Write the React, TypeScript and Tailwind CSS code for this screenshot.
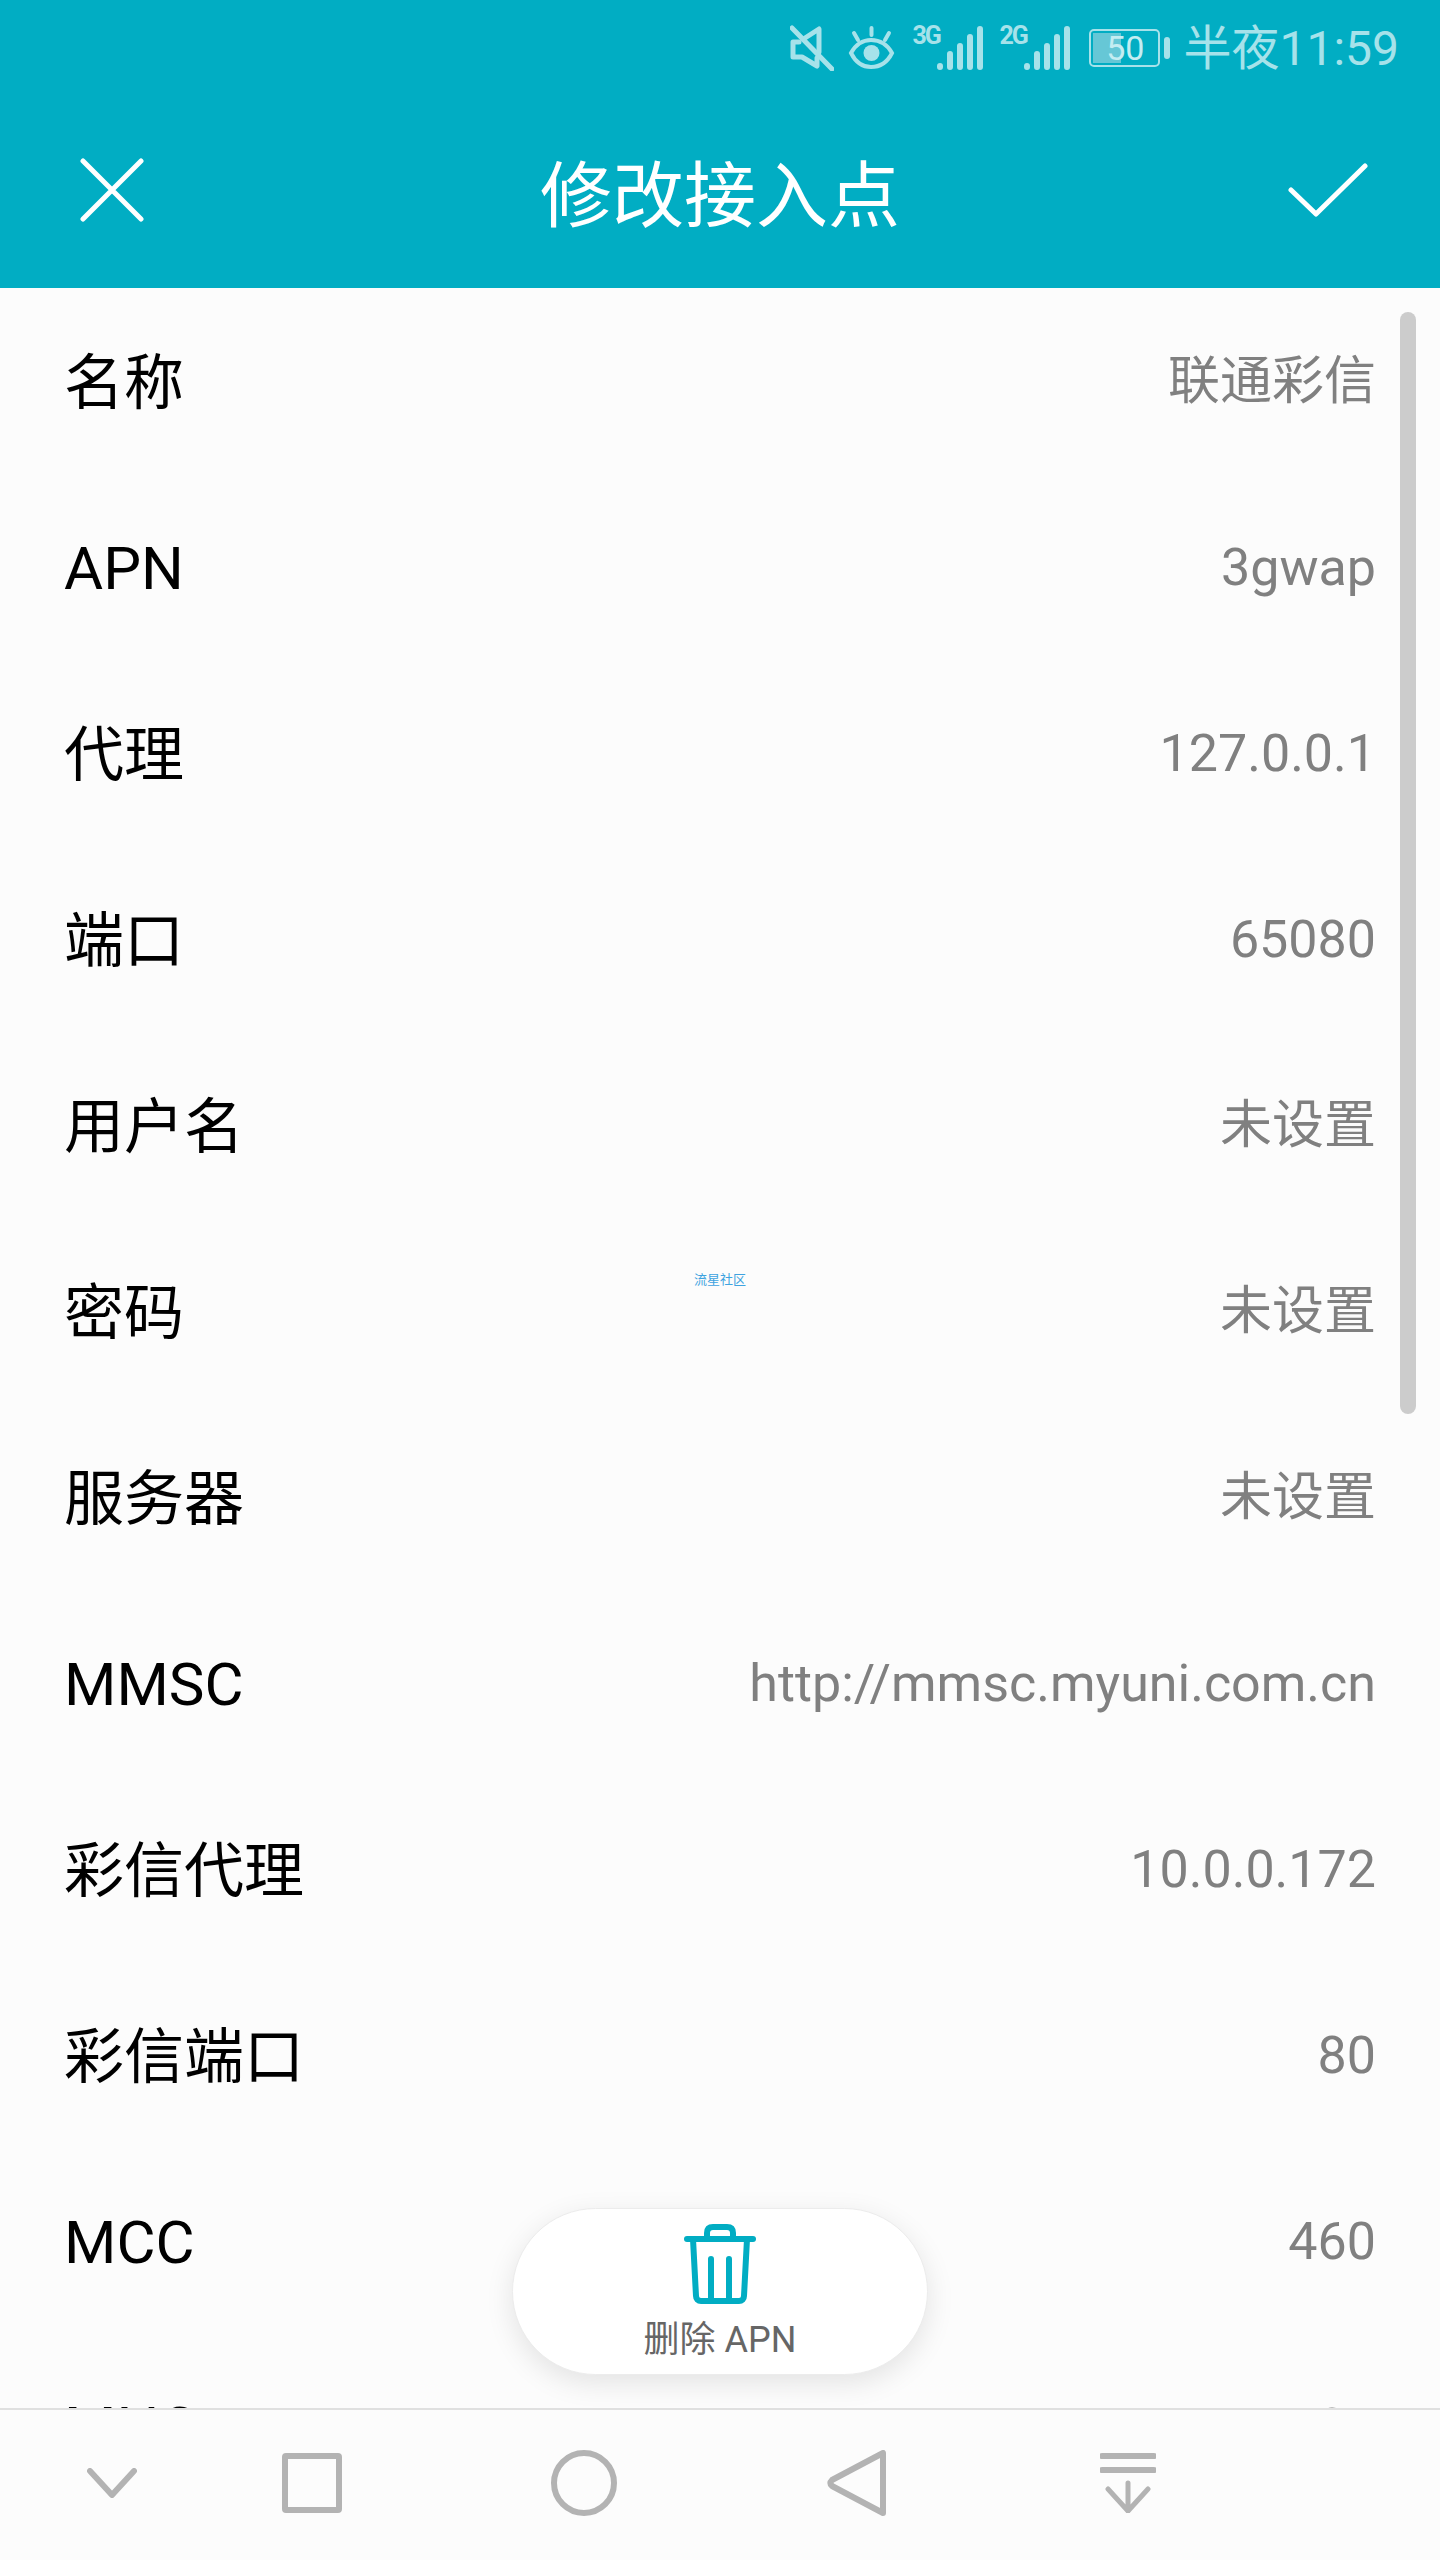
const rows = [
  ["名称", "联通彩信"],
  ["APN", "3gwap"],
  ["代理", "127.0.0.1"],
  ["端口", "65080"],
  ["用户名", "未设置"],
  ["密码", "未设置"],
  ["服务器", "未设置"],
  ["MMSC", "http://mmsc.myuni.com.cn"],
  ["彩信代理", "10.0.0.172"],
  ["彩信端口", "80"],
  ["MCC", "460"],
  ["MNC", "01"],
];

const latin = ["APN", "MMSC", "MCC", "MNC"];

const Signal = ({ label }: { label: string }) => (
  <div className="flex items-start">
    <span className="w-[25px] text-[25px] leading-[20px] font-bold tracking-[-2px] text-[#a6e2ea]">{label}</span>
    <svg width="46" height="44" viewBox="0 0 46 44" stroke="#a6e2ea" strokeWidth="6" strokeLinecap="round">
      <path d="M3 41v-1M13 41V28M23 41V20M33 41V11M43 41V3" />
    </svg>
  </div>
);

const StatusBar = () => (
  <div className="h-[96px] flex items-center justify-end pr-[41px] text-[#a6e2ea]">
    <svg width="44" height="46" viewBox="0 0 44 46" fill="none" stroke="#a6e2ea" strokeWidth="5" strokeLinecap="round" strokeLinejoin="round">
      <path d="M2 3l40 41" />
      <path d="M9 17H3v15h9l15 9V33" />
      <path d="M15 13L29 4v23" />
    </svg>
    <svg className="ml-[14px]" width="47" height="44" viewBox="0 0 47 44" fill="none" stroke="#a6e2ea" strokeWidth="4" strokeLinecap="round">
      <path d="M3 27c5-9 12-13 20-13s16 4 21 13c-5 10-13 14-21 14S8 37 3 27z" />
      <circle cx="23.5" cy="27" r="8" fill="#a6e2ea" stroke="none" />
      <path d="M23.5 2v7M6 7l4 7M41 7l-4 7" />
    </svg>
    <div className="ml-[17px]">
      <Signal label="3G" />
    </div>
    <div className="ml-[16px]">
      <Signal label="2G" />
    </div>
    <div className="ml-[19px] relative w-[71px] h-[38px] rounded-[5px] border-2 border-[#a6e2ea] flex items-center justify-end pr-[14px] overflow-hidden">
      <div className="absolute left-[2px] top-[2px] bottom-[2px] w-[28px] bg-[#66c7d6]" />
      <span className="relative text-[34px] leading-none text-[#c4edf2]">50</span>
    </div>
    <div className="ml-[4px] w-[6px] h-[22px] rounded-full bg-[#a6e2ea]" />
    <span className="ml-[13px] pt-[2px] text-[48px] leading-none text-[#a6e2ea]">半夜11:59</span>
  </div>
);

const Toolbar = () => (
  <div className="h-[192px] pb-[4px] grid grid-cols-[1fr_auto_1fr] items-center px-[72px]">
    <svg className="ml-[8px]" width="64" height="64" viewBox="0 0 64 64" stroke="#fff" strokeWidth="5" strokeLinecap="round">
      <path d="M3 3l58 58M61 3L3 61" />
    </svg>
    <h1 className="pt-[13px] text-[72px] leading-none font-normal text-white">修改接入点</h1>
    <svg className="justify-self-end" width="80" height="54" viewBox="0 0 80 54" fill="none" stroke="#fff" strokeWidth="5" strokeLinecap="round" strokeLinejoin="round">
      <path d="M3 27l25 24L77 3" />
    </svg>
  </div>
);

const NavBar = () => (
  <div className="h-[152px] shrink-0 border-t-2 border-[#e0e0e0] bg-[#fcfcfc] relative">
    <div className="absolute left-[87px] top-[43px] flex items-start">
      <svg className="mt-[15px]" width="50" height="30" viewBox="0 0 50 30" fill="none" stroke="#b3b3b3" strokeWidth="6" strokeLinecap="round" strokeLinejoin="round">
        <path d="M3 3l22 24L47 3" />
      </svg>
      <div className="ml-[145px] w-[60px] h-[60px] rounded-[4px] border-[6px] border-[#b3b3b3]" />
      <div className="ml-[209px] -mt-[3px] w-[66px] h-[66px] rounded-full border-[6px] border-[#b3b3b3]" />
      <svg className="ml-[210px] -mt-[3px]" width="60" height="66" viewBox="0 0 60 66" fill="none" stroke="#b3b3b3" strokeWidth="6" strokeLinejoin="round">
        <path d="M56 3v60L5 36c-2-2-2-4 0-6z" />
      </svg>
      <svg className="ml-[213px]" width="56" height="60" viewBox="0 0 56 60" fill="none" stroke="#b3b3b3" strokeLinecap="round" strokeLinejoin="round">
        <path d="M2 3h52M2 17h52" strokeWidth="6" />
        <path d="M28 30v28M8 36l20 22 20-22" strokeWidth="5" />
      </svg>
    </div>
  </div>
);

export default function App() {
  return (
    <div className="relative w-[1440px] h-[2560px] overflow-hidden flex flex-col bg-[#fcfcfc] font-['Roboto','Noto_Sans_CJK_SC',sans-serif]">
      <div className="shrink-0 bg-[#01adc3]">
        <StatusBar />
        <Toolbar />
      </div>

      <div className="flex-1 min-h-0 overflow-hidden">
        {rows.map(([label, value]) => (
          <div key={label} className="h-[186px] flex items-center justify-between pt-[3px] px-[64px]">
            <span className={`text-[60px] leading-none text-black ${latin.includes(label) ? "" : "pt-[3px]"}`}>{label}</span>
            <span className="pb-[2px] text-[52px] leading-none text-[#808080]">{value}</span>
          </div>
        ))}
      </div>

      <NavBar />

      <div className="absolute left-[1400px] top-[312px] w-[16px] h-[1102px] rounded-full bg-[#cccccc]" />

      <div className="absolute left-[694px] top-[1273px] text-[13px] leading-[14px] text-[#3ea3e0]">流星社区</div>

      <div className="absolute left-[512px] top-[2208px] w-[416px] h-[167px] rounded-full bg-white border border-[#ececec] shadow-[0_8px_28px_rgba(0,0,0,0.1)] flex flex-col items-center pt-[15px]">
        <svg width="72" height="80" viewBox="0 0 72 80" fill="none" stroke="#01adc3" strokeWidth="6" strokeLinecap="round" strokeLinejoin="round">
          <path d="M3 15h66" />
          <path d="M23 15V9c0-4 2-6 6-6h14c4 0 6 2 6 6v6" />
          <path d="M9 15l3 57c0 3 2 5 5 5h38c3 0 5-2 5-5l3-57" />
          <path d="M27 35v42M45 35v42" />
        </svg>
        <span className="mt-[14px] text-[36px] leading-[44px] text-[#666666]">删除 APN</span>
      </div>
    </div>
  );
}
